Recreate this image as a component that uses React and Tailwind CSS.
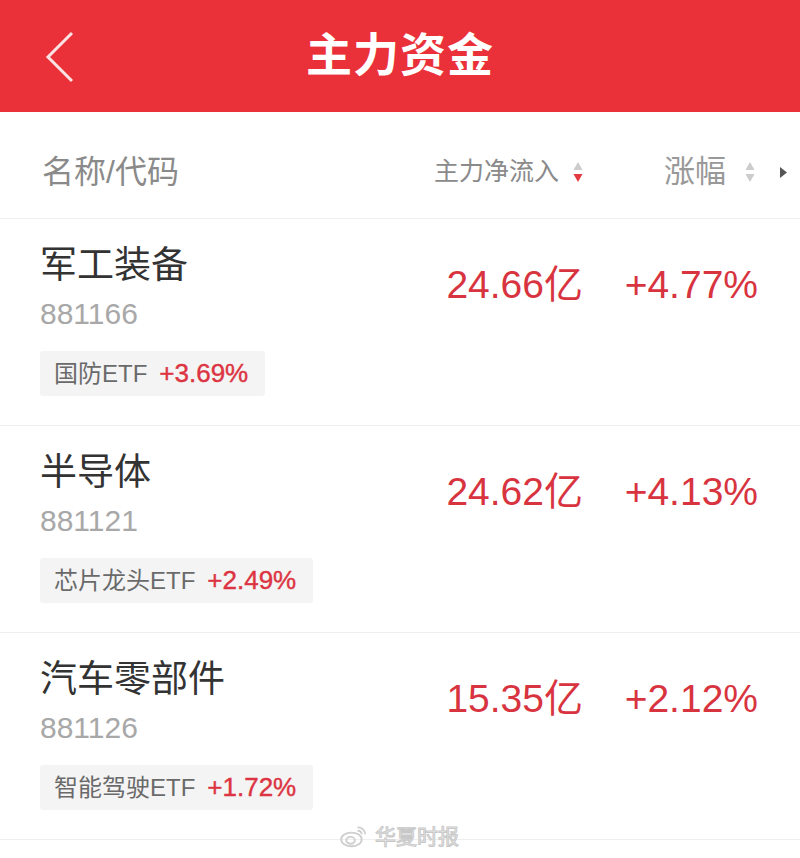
import React from 'react';

const FONT = { fontFamily: '"Liberation Sans", "Noto Sans CJK SC", sans-serif' };

const rows = [
  { name: '军工装备', code: '881166', etf: '国防ETF', etfChg: '+3.69%', flow: '24.66亿', chg: '+4.77%' },
  { name: '半导体', code: '881121', etf: '芯片龙头ETF', etfChg: '+2.49%', flow: '24.62亿', chg: '+4.13%' },
  { name: '汽车零部件', code: '881126', etf: '智能驾驶ETF', etfChg: '+1.72%', flow: '15.35亿', chg: '+2.12%' },
];

// up/down sort arrows, active = which one is red
function SortIcon({ active, className }) {
  return (
    <svg width="10" height="24" viewBox="0 0 10 24" className={className}>
      <path d="M5 2 L9.5 10 L0.5 10 Z" fill={active === 'up' ? '#e23a40' : '#cccccc'} />
      <path d="M0.5 14 L9.5 14 L5 22 Z" fill={active === 'down' ? '#e23a40' : '#cccccc'} />
    </svg>
  );
}

function Row({ item }) {
  return (
    <div className="flex pl-[40px] border-b border-[#efefef] h-[207px]">
      <div className="flex-1 flex flex-col items-start pt-[28px]">
        <div className="text-[37px] leading-none text-[#333] h-[37px]">{item.name}</div>
        <div className="mt-[15px] text-[30px] leading-none text-[#a8a8a8] h-[30px]">{item.code}</div>
        <div className="mt-[22px] h-[45px] flex items-center pl-[14px] pr-[17px] bg-[#f4f4f4] rounded-[3px]">
          <span className="text-[24px] text-[#6a6a6a]">{item.etf}</span>
          <span className="ml-[12px] text-[26px] text-[#dc3442]" style={{ WebkitTextStroke: '0.4px #dc3442' }}>
            {item.etfChg}
          </span>
        </div>
      </div>
      <div className="pt-[46px] text-[39px] leading-none text-[#d8343f] text-right">{item.flow}</div>
      <div className="pt-[46px] w-[175px] text-[39px] leading-none text-[#d8343f] text-right">{item.chg}</div>
      <div className="w-[42px]" />
    </div>
  );
}

export default function App() {
  return (
    <div className="w-[800px] h-[858px] bg-white overflow-hidden relative" style={FONT}>
      {/* top bar */}
      <div className="h-[112px] bg-[#ea3039] flex items-center justify-center relative">
        <svg className="absolute left-[44px] top-[30px]" width="32" height="54" viewBox="0 0 32 54">
          <path d="M28 3 L4 27 L28 51" fill="none" stroke="#fbe3e4" strokeWidth="3" />
        </svg>
        <div className="text-[46px] font-bold text-white tracking-[1px] -mt-[2px]">主力资金</div>
      </div>

      {/* column header */}
      <div className="h-[107px] flex items-center pl-[42px] pt-[14px] border-b border-[#efefef]">
        <div className="flex-1 text-[32px] text-[#8a8a8a]">名称/代码</div>
        <div className="flex items-center text-[25px] text-[#8a8a8a]">
          主力净流入
          <SortIcon active="down" className="ml-[14px]" />
        </div>
        <div className="w-[175px] flex items-center justify-end text-[31px] text-[#999] pr-[3px]">
          涨幅
          <SortIcon className="ml-[19px]" />
        </div>
        <div className="w-[42px] flex justify-center pl-[8px]">
          <svg width="7" height="11" viewBox="0 0 7 11">
            <path d="M0 0 L7 5.5 L0 11 Z" fill="#555" />
          </svg>
        </div>
      </div>

      {rows.map((r) => (
        <Row key={r.code} item={r} />
      ))}

      {/* watermark */}
      <div className="absolute left-[340px] top-[824px] flex items-center gap-[7px]">
        <svg width="28" height="24" viewBox="0 0 32 28">
          <ellipse cx="13" cy="18" rx="12" ry="8" fill="none" stroke="#cfcfcf" strokeWidth="2.2" />
          <ellipse cx="12" cy="19" rx="5" ry="4" fill="none" stroke="#cfcfcf" strokeWidth="2.2" />
          <path d="M20 4 A8 8 0 0 1 29 12" fill="none" stroke="#cfcfcf" strokeWidth="2.2" />
          <path d="M20 8 A4 4 0 0 1 25 12" fill="none" stroke="#cfcfcf" strokeWidth="2.2" />
        </svg>
        <span
          className="text-[21px] leading-none text-[#f2f2f2]"
          style={{ WebkitTextStroke: '1px #c8c8c8' }}
        >
          华夏时报
        </span>
      </div>
    </div>
  );
}
